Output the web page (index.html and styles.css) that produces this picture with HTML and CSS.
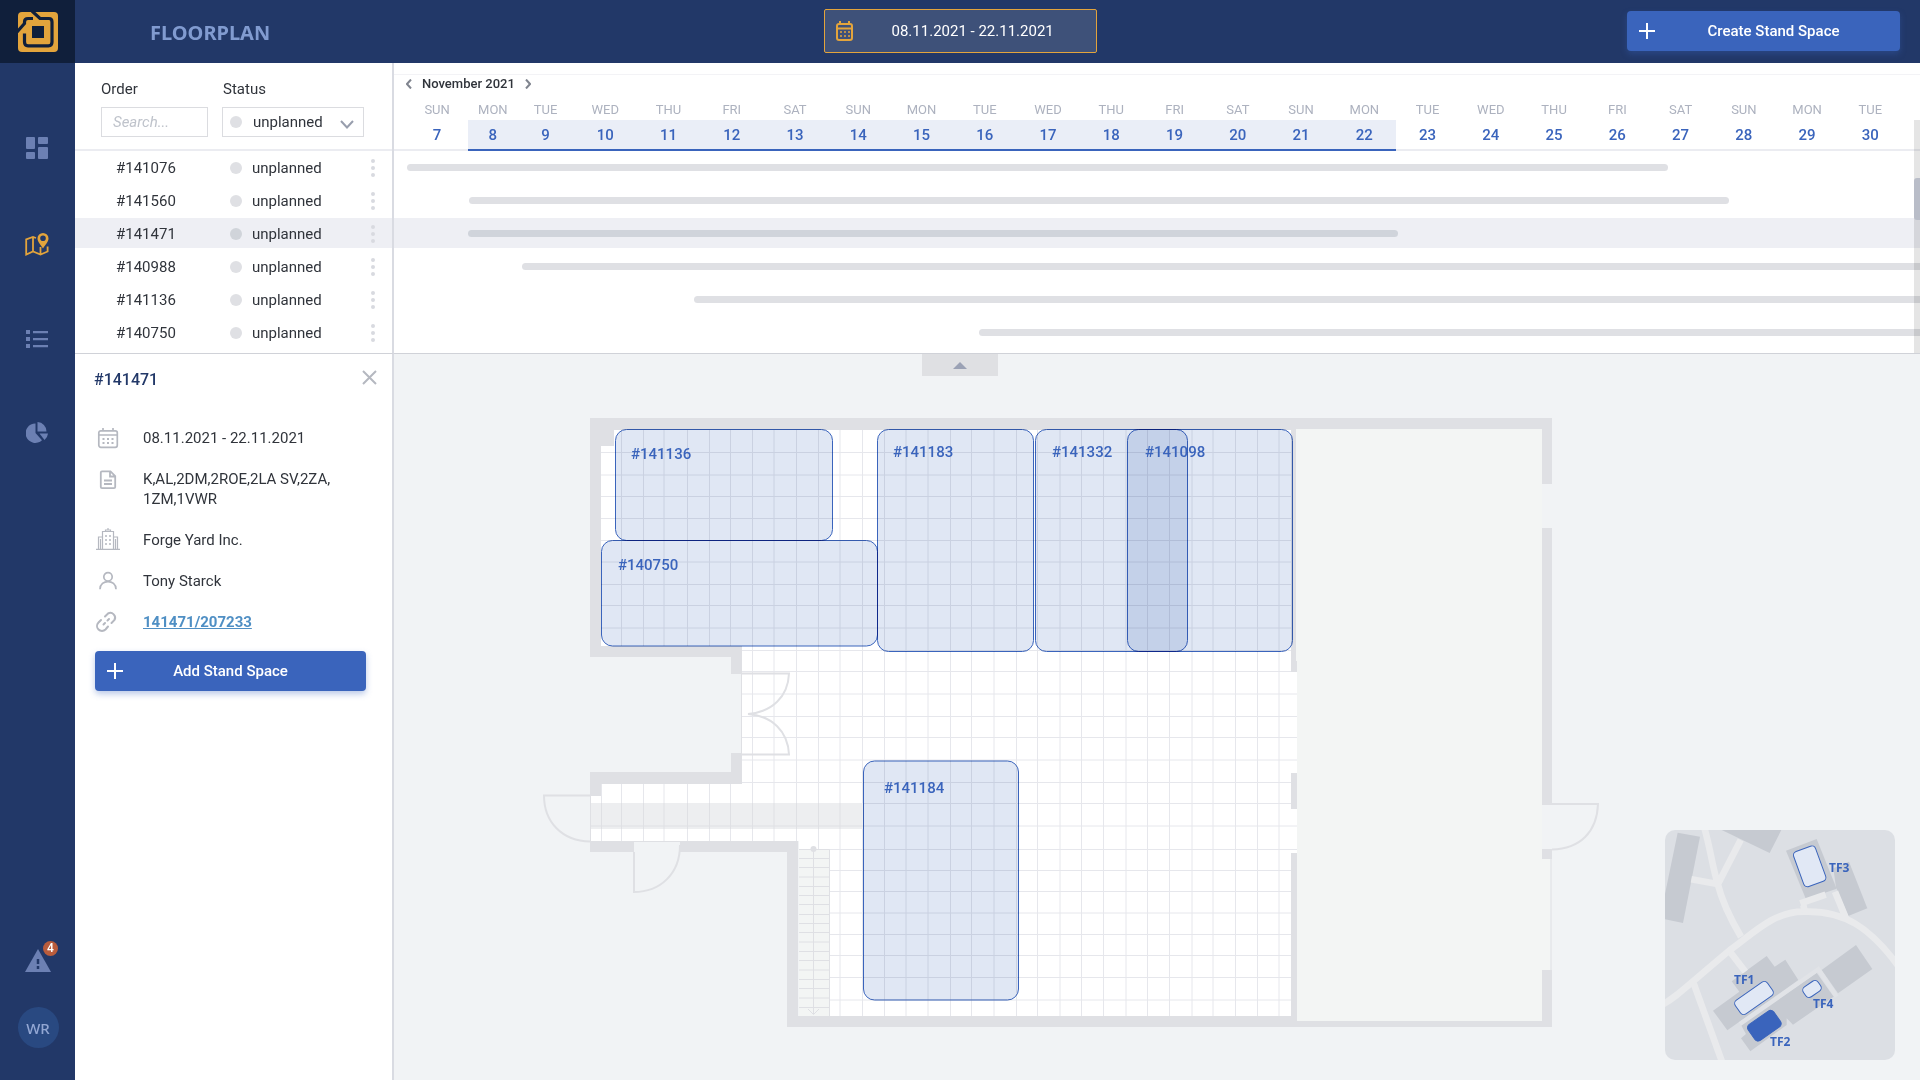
FILE: index.html
```html
<!DOCTYPE html>
<html lang="en">
<head>
<meta charset="utf-8">
<meta name="viewport" content="width=device-width, initial-scale=1">
<title>Floorplan</title>
<link rel="stylesheet" href="styles.css">
</head>
<body>
<header class="topbar">
  <div class="topbar-start">
    <a class="logo" href="#" aria-label="Home">
      <svg width="40" height="40" viewBox="0 0 40 40">
        <rect width="40" height="40" rx="4" fill="#e3a43c"/>
        <g fill="none" stroke="#101f3b" stroke-width="3.2">
          <path d="M-1 20 6.5 11.500V10Q6.500 6.500 10 6.500H15"/>
          <path d="M14 -1 22 6.500H31Q34 6.500 34 10V30Q34 33.800 30.500 33.800H10Q6.500 33.800 6.500 30V21.500"/>
        </g>
        <rect x="14" y="14" width="12" height="12" fill="#101f3b"/>
      </svg>
    </a>
    <h1 class="title">FLOORPLAN</h1>
  </div>
  <button class="date-range" type="button">
    <svg width="20" height="22" viewBox="0 0 20 22" fill="none" stroke="#e3a43c" stroke-width="2">
      <rect x="2" y="4" width="15" height="16" rx="2"/><path d="M5 1v3M14 1v3M2 8.500h15"/>
      <path d="M5 12h2M9 12h2M13 12h2M5 16h2M9 16h2M13 16h2" stroke-width="1.600"/>
    </svg>
    <span>08.11.2021 - 22.11.2021</span>
  </button>
  <div class="topbar-end">
    <button class="primary create" type="button">
      <svg width="16" height="16" viewBox="0 0 16 16" stroke="#fff" stroke-width="2"><path d="M0 8h16M8 0v16"/></svg>
      <span>Create Stand Space</span>
    </button>
  </div>
</header>

<div class="shell">
  <nav class="sidebar" aria-label="Main">
    <a href="#" aria-label="Dashboard"><svg width="22" height="22" viewBox="0 0 22 22" fill="#6c80b3"><rect width="9" height="12" rx="1"/><rect x="12" width="10" height="7" rx="1"/><rect y="15" width="9" height="7" rx="1"/><rect x="12" y="10" width="10" height="12" rx="1"/></svg></a>
    <a href="#" aria-label="Floorplan"><svg width="24" height="23" viewBox="0 0 24 23" fill="none" stroke="#e3a43c" stroke-width="1.800"><path d="M11 5 8 4 1.200 6.500V21.500L8 18.500 15.500 21.500 22.600 18.500V13.500M8 4V18.500M15.500 14V21.500"/><path fill="#e3a43c" fill-rule="evenodd" stroke="none" d="M18 0a5.500 5.500 0 0 1 5.500 5.500C23.500 9 20 12 18 15.500 16 12 12.500 9 12.500 5.500A5.500 5.500 0 0 1 18 0zm0 2.500a2.800 2.800 0 1 0 0 5.600 2.800 2.800 0 0 0 0-5.600z"/></svg></a>
    <a href="#" aria-label="Orders"><svg width="22" height="18" viewBox="0 0 22 18" fill="#6c80b3"><path d="M0 0h4v4H0zM0 7h4v4H0zM0 14h4v4H0z"/><path d="M7 1h15v2.200H7zM7 8h15v2.200H7zM7 15h15v2.200H7z"/></svg></a>
    <a href="#" aria-label="Reports"><svg width="22" height="21" viewBox="0 0 22 21" fill="#6c80b3"><path d="M9.500 1.500V11L16 18.200A9.700 9.700 0 1 1 9.500 1.500z"/><path d="M11.500 0A9.300 9.300 0 0 1 20.500 9.500H11.500z"/><path d="M13.500 11.500H22Q21.500 15.500 18.500 18z"/></svg></a>
    <div class="sidebar-foot">
      <a class="alerts" href="#" aria-label="Alerts, 4 new">
        <svg width="26" height="23" viewBox="0 0 26 23"><path d="M13 0 26 23H0z" fill="#6c80b3"/><path d="M13 10v5M13 17v3" stroke="#223868" stroke-width="2.500"/></svg>
        <span class="badge">4</span>
      </a>
      <a class="avatar" href="#">WR</a>
    </div>
  </nav>

  <section class="orders">
    <form class="filters">
      <label for="order">Order</label>
      <label for="status">Status</label>
      <input id="order" type="text" placeholder="Search...">
      <div class="select">
        <i class="dot"></i>
        <select id="status"><option>unplanned</option></select>
        <svg width="14" height="9" viewBox="0 0 14 9" fill="none" stroke="#989ead" stroke-width="2"><path d="M1 1 7 7.500 13 1"/></svg>
      </div>
    </form>
    <table class="order-table">
      <tbody>
        <tr><td>#141076</td><td class="state"><i class="dot"></i>unplanned</td><td><button class="more" type="button" aria-label="More"><i></i><i></i><i></i></button></td></tr>
        <tr><td>#141560</td><td class="state"><i class="dot"></i>unplanned</td><td><button class="more" type="button" aria-label="More"><i></i><i></i><i></i></button></td></tr>
        <tr class="active"><td>#141471</td><td class="state"><i class="dot"></i>unplanned</td><td><button class="more" type="button" aria-label="More"><i></i><i></i><i></i></button></td></tr>
        <tr><td>#140988</td><td class="state"><i class="dot"></i>unplanned</td><td><button class="more" type="button" aria-label="More"><i></i><i></i><i></i></button></td></tr>
        <tr><td>#141136</td><td class="state"><i class="dot"></i>unplanned</td><td><button class="more" type="button" aria-label="More"><i></i><i></i><i></i></button></td></tr>
        <tr><td>#140750</td><td class="state"><i class="dot"></i>unplanned</td><td><button class="more" type="button" aria-label="More"><i></i><i></i><i></i></button></td></tr>
      </tbody>
    </table>
  </section>

  <section class="timeline">
    <div class="timeline-head">
      <div class="month">
        <button type="button" aria-label="Previous month"><svg width="6" height="10" viewBox="0 0 6 10"><path d="M5 0.500 1 5 5 9.500"/></svg></button>
        <span>November 2021</span>
        <button type="button" aria-label="Next month"><svg width="6" height="10" viewBox="0 0 6 10"><path d="M1 0.500 5 5 1 9.500"/></svg></button>
      </div>
      <ol class="days">
        <li><span>SUN</span><b>7</b></li>
        <li class="in"><span>MON</span><b>8</b></li>
        <li class="in"><span>TUE</span><b>9</b></li>
        <li class="in"><span>WED</span><b>10</b></li>
        <li class="in"><span>THU</span><b>11</b></li>
        <li class="in"><span>FRI</span><b>12</b></li>
        <li class="in"><span>SAT</span><b>13</b></li>
        <li class="in"><span>SUN</span><b>14</b></li>
        <li class="in"><span>MON</span><b>15</b></li>
        <li class="in"><span>TUE</span><b>16</b></li>
        <li class="in"><span>WED</span><b>17</b></li>
        <li class="in"><span>THU</span><b>18</b></li>
        <li class="in"><span>FRI</span><b>19</b></li>
        <li class="in"><span>SAT</span><b>20</b></li>
        <li class="in"><span>SUN</span><b>21</b></li>
        <li class="in"><span>MON</span><b>22</b></li>
        <li><span>TUE</span><b>23</b></li>
        <li><span>WED</span><b>24</b></li>
        <li><span>THU</span><b>25</b></li>
        <li><span>FRI</span><b>26</b></li>
        <li><span>SAT</span><b>27</b></li>
        <li><span>SUN</span><b>28</b></li>
        <li><span>MON</span><b>29</b></li>
        <li><span>TUE</span><b>30</b></li>
      </ol>
    </div>
    <div class="lanes">
      <div class="lane"><i class="bar" style="margin-left:0.85%;width:82.63%"></i></div>
      <div class="lane"><i class="bar" style="margin-left:4.91%;width:82.57%"></i></div>
      <div class="lane active"><i class="bar" style="margin-left:4.85%;width:60.94%"></i></div>
      <div class="lane"><i class="bar open" style="margin-left:8.39%"></i></div>
      <div class="lane"><i class="bar open" style="margin-left:19.69%"></i></div>
      <div class="lane"><i class="bar open" style="margin-left:38.34%"></i></div>
    </div>
    <div class="scroll"><i></i></div>
  </section>

  <aside class="details">
    <div class="details-head">
      <h2>#141471</h2>
      <button type="button" aria-label="Close"><svg width="15" height="15" viewBox="0 0 15 15" stroke="#b5b8c0" stroke-width="2"><path d="M1 1 14 14M14 1 1 14"/></svg></button>
    </div>
    <ul class="facts">
      <li><svg viewBox="0 0 24 20" fill="none" stroke="#b5b8c0" stroke-width="1.700"><rect x="2.800" y="2.800" width="18.500" height="16.500" rx="2"/><path d="M7 0v3M17 0v3M3 7h18"/><path d="M6.500 11h2M11 11h2M15.500 11h2M6.500 15h2M11 15h2M15.500 15h2" stroke-width="2"/></svg><span>08.11.2021 - 22.11.2021</span></li>
      <li><svg viewBox="0 0 24 20" fill="none" stroke="#b5b8c0" stroke-width="1.800"><path d="M14.500 2.300H6Q4.800 2.300 4.800 3.500V18Q4.800 19.200 6 19.200H18Q19.200 19.200 19.200 18V7zM14 2.300V7.500H19"/><path d="M8 11.500h8M8 15h8"/></svg><span>K,AL,2DM,2ROE,2LA SV,2ZA, 1ZM,1VWR</span></li>
      <li><svg viewBox="0 0 24 20" fill="none" stroke="#b5b8c0" stroke-width="1.200"><path d="M0 19.300H24M6.500 19V1.500H17.500V19M9.500 1.500V0H14.500V1.500M12-2V0M2.500 19V7H6.500M17.500 7H21.500V19M4.500 9V19M19.500 9V19"/><path d="M9 6h2M13 6h2M9 10h2M13 10h2M9 14h2M13 14h2" stroke-width="1.600"/></svg><span>Forge Yard Inc.</span></li>
      <li><svg viewBox="0 0 24 20" fill="none" stroke="#b5b8c0" stroke-width="1.700"><circle cx="12" cy="5.800" r="4.200"/><path d="M4 18.200C4 8 20 8 20 18.200"/></svg><span>Tony Starck</span></li>
      <li><svg viewBox="0 0 24 20" fill="none" stroke="#b5b8c0" stroke-width="2" stroke-linecap="round"><path d="M5 8 2.500 10.500A4.800 4.800 0 0 0 9.500 17.500L12 14.500"/><path d="M9 4.500 12 1.500A4.800 4.800 0 0 1 18.500 8L15.500 11"/><path d="M7.500 12.500 9 11M11.500 8.500 13 7"/></svg><a href="#">141471/207233</a></li>
    </ul>
    <button class="primary add" type="button">
      <svg width="16" height="16" viewBox="0 0 16 16" stroke="#fff" stroke-width="2"><path d="M0 8h16M8 0v16"/></svg>
      <span>Add Stand Space</span>
    </button>
  </aside>

  <main class="plan">
    <button class="collapse" type="button" aria-label="Collapse orders"></button>
    <svg class="floor" viewBox="394 354 1526 726" role="img" aria-label="Hall floorplan">
      <defs>
        <clipPath id="room"><path d="M601 430H1297V1016H799V841H590V784H742V646H601z"/></clipPath>
      </defs>
      <path class="white" d="M601 446H614V430H1297V1016H799V841H590V784H742V646H601z"/>
      <g clip-path="url(#room)">
        <path class="grid" d="M621.500 430v586M643.500 430v586M664 430v586M687.500 430v586M709.500 430v586M730.500 430v586M752.500 430v586M774 430v586M796.500 430v586M818.500 430v586M840 430v586M862.500 430v586M884.500 430v586M906 430v586M928 430v586M950.500 430v586M971.500 430v586M994 430v586M1016.500 430v586M1037.500 430v586M1060 430v586M1081.500 430v586M1103.500 430v586M1126 430v586M1147.500 430v586M1169.500 430v586M1192 430v586M1213 430v586M1235.500 430v586M1257.500 430v586M1279 430v586M601.500 784v57"/>
        <path class="grid" d="M601 452.500h696M601 475h696M601 496.500h696M601 518.500h696M601 540.500h696M601 562h696M601 584.500h696M601 605.500h696M601 628h696M601 650.500h696M601 671.500h696M601 694h696M601 716.500h696M601 737.500h696M601 760h696M601 782.500h696M590 803.500h707M590 826h707M799 849.500h498M799 870.500h498M799 891.500h498M799 913h498M799 934.500h498M799 955.500h498M799 977.500h498M799 1000h498"/>
      </g>
      <rect class="strip" x="590" y="803" width="274" height="26"/>
      <path class="thin" d="M590 826h274M601.500 803v26M621.500 803v26M643.500 803v26M664 803v26M687.500 803v26M709.500 803v26M730.500 803v26M752.500 803v26M774 803v26M796.500 803v26M818.500 803v26M840 803v26"/>
      <path class="hall" d="M1296 429H1542V859H1550V970H1542V1021H1297V672H1296z"/>
      <path class="wall" d="M590 418H1552V484H1542V429H1296V661H1297V672H1291V430H614V446H601V646H742V674H731V657H590z"/>
      <path class="wall" d="M731 753H742V784H601V796H590V772H731zM590 841H634V852H590zM680 841H798V1016H1291V853H1297V1021H1542V970H1552V1027H787V852H680zM1291 773H1297V809H1291zM1542 528H1552V804H1542zM1542 849H1552V859H1542z"/>
      <path class="door open-door" d="M742 673.500H789C788 697 772 712 748 714 772 716 788 731 789 754.500H742"/>
      <path class="door" d="M590 795.500H544C544 822 562 841 590 841.500M634 852V892C660 892 680 874 680 845M1542 804H1598C1597 832 1580 849 1552 849.500"/>
      <path class="thin" d="M590.500 796V841M741.500 674V753M1551 859V970M634 841.500H680"/>
      <rect class="hall" x="799" y="849" width="30" height="167"/>
      <path class="thin" d="M799 858.500h30M799 867.500h30M799 877h30M799 886.500h30M799 895.500h30M799 904.500h30M799 914.500h30M799 923.500h30M799 932.500h30M799 942h30M799 951.500h30M799 960.500h30M799 970h30M799 979.500h30M799 988.500h30M799 998h30M799 1007.500h30M799 849.500h30.500V1016M813.500 849V1014M808 1009 813.500 1014.500 819 1009"/>
      <circle cx="813.500" cy="849" r="3" fill="#dfe0e4"/>
      <g class="stand">
        <rect x="615.500" y="429.500" width="217" height="111" rx="11"/>
        <rect x="601.500" y="540.500" width="276" height="105.500" rx="11"/>
        <rect x="877.500" y="429.500" width="156" height="222" rx="11"/>
        <rect x="1035.500" y="429.500" width="152" height="222" rx="11"/>
        <rect x="1127.500" y="429.500" width="165" height="222" rx="11"/>
        <rect x="863.500" y="761" width="155" height="239" rx="11"/>
      </g>
      <g class="stand-label">
        <text x="631" y="459">#141136</text>
        <text x="618" y="570">#140750</text>
        <text x="893" y="457">#141183</text>
        <text x="1052" y="457">#141332</text>
        <text x="1145" y="457">#141098</text>
        <text x="884" y="793">#141184</text>
      </g>
    </svg>
    <svg class="minimap" width="230" height="230" viewBox="0 0 230 230" role="img" aria-label="Site map">
      <rect width="230" height="230" fill="#dcdfe4"/>
      <g transform="scale(0.33333) translate(-75 -60)">
        <g fill="#c6cad1">
          <path d="M113 68 180 80 129 339 60 325z"/><path d="M245 60H424L389 129z"/>
          <path d="M438 122 530 87 590 236 498 268z"/><path d="M580 175 627 155 682 295 625 318 588 232z"/>
          <path d="M545 480 648 405 697 477 594 550z"/>
          <path d="M275 514 380 438 404 470 436 449 475 510 262 661 219 602 298 545z"/>
          <path d="M303 645 530 488 581 560 459 644 440 625 440 645 331 724 303 685 318 672z"/>
        </g>
        <g fill="none" stroke="#e9eaec" stroke-width="20">
          <path d="M60 587C100 570 150 520 270 420C340 370 400 305 490 305C610 300 690 350 780 475"/>
          <path d="M192 50C210 110 215 160 232 218C245 270 270 325 303 380M302 90 234 222M154 208 232 222"/>
          <path d="M161 520 246 755M270 425 316 485"/>
          <path d="M481 280 557 254M490 285 494 305M585 245 620 330"/>
        </g>
        <path fill="none" stroke="#e1e3e7" stroke-width="13" d="M300 642 535 478 590 560"/>
        <g fill="#e1e8f5" stroke="#3a64bc" stroke-width="3">
          <rect x="474" y="113" width="70" height="112" rx="12" transform="rotate(-20 509 169)"/>
          <rect x="283" y="539" width="118" height="50" rx="12" transform="rotate(-35 342 564)"/>
          <rect x="489" y="519" width="54" height="36" rx="12" transform="rotate(-35 516 537)"/>
          <rect x="326" y="618" width="94" height="58" rx="12" fill="#3a64bc" transform="rotate(-35 373 647)"/>
        </g>
      </g>
      <g class="minimap-label">
        <text x="164" y="42">TF3</text><text x="69" y="154">TF1</text><text x="148" y="178">TF4</text><text x="105" y="216">TF2</text>
      </g>
    </svg>
  </main>
</div>
</body>
</html>
```
FILE: styles.css
```css
* { box-sizing: border-box; }

body {
  margin: 0;
  min-height: 100vh;
  display: flex;
  flex-direction: column;
  font: 15px/20px Roboto, sans-serif;
  color: #30343b;
  background: #fff;
}

button, input, select { font: inherit; color: inherit; margin: 0; padding: 0; border: 0; background: none; }
button { cursor: pointer; }
svg { display: block; flex: none; }
ul, ol { list-style: none; margin: 0; padding: 0; }

/* Top bar */
.topbar {
  display: grid;
  grid-template-columns: 1fr 273px 1fr;
  align-items: center;
  height: 63px;
  background: #223868;
}
.topbar-start { display: flex; align-items: center; gap: 75px; }
.logo { display: grid; place-items: center; width: 75px; height: 63px; background: #101f3b; }
.title { margin: 2px 0 0; font: 700 20px/28px "Noto Sans", sans-serif; color: #819bd0; }
.date-range {
  display: flex;
  align-items: center;
  gap: 37px;
  height: 44px;
  margin-bottom: 2px;
  padding: 0 10px;
  border: 1px solid #e3a43c;
  border-radius: 2px;
  background: #3e5179;
  color: #fff;
}
.topbar-end { display: flex; justify-content: flex-end; padding: 0 20px 2px 0; }

.primary {
  display: flex;
  align-items: center;
  height: 40px;
  padding-left: 12px;
  border-radius: 4px;
  background: #3a64bc;
  color: #fff;
  font-weight: 500;
  box-shadow: 0 3px 6px rgba(58, 100, 188, 0.35);
}
.primary span { flex: 1; text-align: center; }
.create { width: 273px; padding-right: 8px; }
.add { width: 271px; padding-right: 28px; }

/* Shell */
.shell {
  flex: 1;
  display: grid;
  grid-template-columns: 75px 319px minmax(0, 1fr);
  grid-template-rows: auto 1fr;
}

.sidebar {
  grid-row: 1 / 3;
  display: flex;
  flex-direction: column;
  align-items: center;
  gap: 74px;
  padding: 74px 1px 32px 0;
  background: #223868;
}
.sidebar-foot { display: flex; flex-direction: column; align-items: center; gap: 35px; margin-top: auto; padding-left: 2px; }
.alerts { position: relative; }
.badge {
  position: absolute;
  top: -8px;
  right: -7px;
  width: 15px;
  height: 15px;
  border-radius: 50%;
  background: #b95c3c;
  color: #fff;
  font: 500 12px/15px Roboto, sans-serif;
  text-align: center;
}
.avatar {
  width: 41px;
  height: 41px;
  border-radius: 50%;
  background: #294981;
  color: #93a7d3;
  font: 500 15px/42px "Noto Sans", sans-serif;
  text-align: center;
  text-decoration: none;
}

/* Orders */
.orders { border-right: 2px solid #d9dbe2; border-bottom: 1px solid #d0d2d8; }
.filters {
  display: grid;
  grid-template-columns: 107px 142px;
  gap: 9px 14px;
  padding: 17px 0 12px 26px;
  border-bottom: 2px solid #ebecf1;
  line-height: 18px;
}
.filters label + label { padding-left: 1px; }
.filters input, .select { height: 30px; border: 1px solid #dbdce0; }
.filters input { width: 100%; padding-left: 11px; }
.filters input::placeholder { color: #bfc3cb; font-style: italic; opacity: 1; }
.dot { width: 12px; height: 12px; border-radius: 50%; background: #dfe0e4; }
.select { position: relative; }
.select .dot { position: absolute; left: 7px; top: 8px; }
.select svg { position: absolute; right: 9px; top: 12px; pointer-events: none; }
.select select { width: 100%; height: 28px; padding-left: 30px; appearance: none; }

.order-table { display: block; padding: 1px 0 6px; }
.order-table tbody { display: grid; gap: 3px; }
.order-table tr { display: grid; grid-template-columns: 114px 1fr 16px; align-items: center; height: 30px; padding: 0 11px 0 41px; }
.order-table td { padding: 2px 0 0; }
.state { display: flex; align-items: center; gap: 10px; }
.order-table .active { background: #eeeff4; }
.active .dot { background: #d0d4da; }
.more { display: grid; justify-items: center; gap: 3px; width: 16px; }
.more i { width: 4px; height: 4px; border-radius: 50%; background: #d8dae0; }

/* Timeline */
.timeline { position: relative; border-bottom: 1px solid #d0d2d8; }
.timeline-head { height: 88px; border-bottom: 2px solid #ebecf1; }
.timeline-head::before { content: ""; display: block; height: 11px; border-bottom: 1px solid #f3f3f6; }
.month { display: flex; align-items: center; gap: 10px; height: 17px; padding-left: 12px; font-size: 13px; font-weight: 500; }
.month path { fill: none; stroke: #80858f; stroke-width: 2; }
.days { display: grid; grid-template-columns: 62fr 49fr 56fr repeat(21, 63fr); padding: 8px 18px 0 12px; text-align: center; }
.days li { min-width: 0; }
.days span { display: block; font-size: 13px; color: #adb2bf; }
.days b { display: block; height: 31px; padding-top: 5px; font-weight: 500; color: #3a64bc; }
.days .in b { background: #eaeef7; border-bottom: 2px solid #3a64bc; }
.lanes { display: grid; gap: 3px; padding: 1px 0 6px; }
.lane { display: flex; align-items: center; height: 30px; }
.lane.active { background: #eeeff4; }
.bar { height: 7px; border-radius: 4px; background: #dfe0e4; }
.bar.open { flex: 1; border-radius: 4px 0 0 4px; }
.active .bar { background: #d0d4db; }
.scroll { position: absolute; top: 57px; right: 0; bottom: 0; width: 6px; padding-top: 58px; background: rgba(0, 0, 0, 0.1); }
.scroll i { display: block; height: 42px; border-radius: 3px 0 0 3px; background: #b9bdc8; }

/* Order details */
.details { padding: 12px 14px 0 19px; border-right: 2px solid #d9dbe2; }
.details-head { display: flex; justify-content: space-between; align-items: flex-start; height: 26px; }
.details-head h2 { margin: 4px 0 0; font-size: 16px; font-weight: 500; color: #223868; }
.details-head button { padding: 4px 1px; }
.facts { display: grid; gap: 21px; padding: 36px 0 19px 2px; }
.facts li { display: flex; gap: 23px; }
.facts svg { width: 24px; height: 20px; overflow: visible; }
.facts a { font-weight: 700; color: #4f8fc4; text-decoration: underline; }
.details .add { margin-left: 1px; }

/* Floorplan */
.plan { position: relative; background: #f1f3f5; }
.collapse {
  position: absolute;
  top: 0;
  left: calc(50vw - 432px);
  display: grid;
  place-items: center;
  width: 76px;
  height: 22px;
  background: #dfe0e3;
}
.collapse::before { content: ""; border: 7px solid transparent; border-top: 0; border-bottom: 7px solid #9ba2b5; }
.floor { width: 100%; height: auto; }
.white { fill: #fff; }
.strip { fill: #edeef0; }
.hall { fill: #f3f5f4; }
.wall { fill: #dfe0e4; }
.grid { fill: none; stroke: #e6e7ec; }
.door { fill: #f1f3f5; stroke: #dfe0e4; stroke-width: 2; }
.open-door { fill: none; }
.thin { fill: none; stroke: #dfe0e4; }
.stand { fill: rgba(58, 100, 188, 0.155); stroke: #3a64bc; }
.stand rect { mix-blend-mode: multiply; }
.stand-label { font-size: 15px; font-weight: 500; fill: #3a64bc; }
.minimap { position: absolute; right: 25px; bottom: 20px; border-radius: 10px; }
.minimap-label { font: 700 12px "Noto Sans", sans-serif; fill: #3a64bc; }
```
